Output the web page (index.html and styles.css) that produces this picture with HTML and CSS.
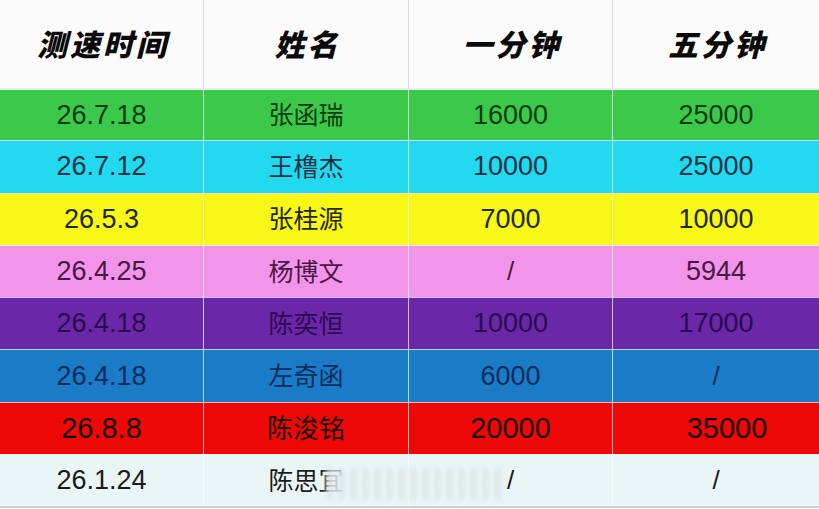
FILE: index.html
```html
<!DOCTYPE html>
<html lang="zh">
<head>
<meta charset="utf-8">
<link rel="stylesheet" href="styles.css">
</head>
<body>
<div class="table">
  <div class="row head">
    <div class="cell">测速时间</div>
    <div class="cell">姓名</div>
    <div class="cell">一分钟</div>
    <div class="cell">五分钟</div>
  </div>
  <div class="row green">
    <div class="cell">26.7.18</div><div class="cell cjk">张函瑞</div><div class="cell">16000</div><div class="cell">25000</div>
  </div>
  <div class="row cyan">
    <div class="cell">26.7.12</div><div class="cell cjk">王橹杰</div><div class="cell">10000</div><div class="cell">25000</div>
  </div>
  <div class="row yellow">
    <div class="cell">26.5.3</div><div class="cell cjk">张桂源</div><div class="cell">7000</div><div class="cell">10000</div>
  </div>
  <div class="row pink">
    <div class="cell">26.4.25</div><div class="cell cjk">杨博文</div><div class="cell slash">/</div><div class="cell">5944</div>
  </div>
  <div class="row purple">
    <div class="cell">26.4.18</div><div class="cell cjk">陈奕恒</div><div class="cell">10000</div><div class="cell">17000</div>
  </div>
  <div class="row blue">
    <div class="cell">26.4.18</div><div class="cell cjk">左奇函</div><div class="cell">6000</div><div class="cell slash">/</div>
  </div>
  <div class="row red">
    <div class="cell">26.8.8</div><div class="cell cjk">陈浚铭</div><div class="cell">20000</div><div class="cell shifted">35000</div>
  </div>
  <div class="row light">
    <div class="cell">26.1.24</div><div class="cell cjk">陈思冝</div><div class="cell slash">/</div><div class="cell slash">/</div>
  </div>
</div>
<div class="watermark"></div>
</body>
</html>
```
FILE: styles.css
```css
html, body {
  margin: 0;
  padding: 0;
  background: #ffffff;
}
body {
  width: 819px;
  height: 509px;
  overflow: hidden;
  position: relative;
  font-family: "Liberation Sans", "Noto Sans CJK SC", sans-serif;
}
.table {
  display: flex;
  flex-direction: column;
  border-bottom: 2px solid #c9d3d3;
}
.row {
  display: grid;
  grid-template-columns: 204px 205px 204px 206px;
  height: 52.3px;
  border-top: 1px solid rgba(255,255,255,0.7);
  box-sizing: border-box;
}
.cell {
  display: flex;
  align-items: center;
  justify-content: center;
  font-size: 27px;
  border-right: 1px solid rgba(255,255,255,0.7);
  box-sizing: border-box;
}
.cell:last-child { border-right: none; }
.cjk {
  font-family: "Noto Sans CJK SC", sans-serif;
  font-size: 25px;
  padding-bottom: 4px;
}
.slash { font-size: 26px; }
.shifted { padding-left: 22px; }

.head {
  height: 88px;
  border-top: none;
  background: #fbfbfb;
}
.head .cell {
  font-family: "Noto Sans CJK SC", sans-serif;
  font-weight: 900;
  font-style: italic;
  font-size: 30px;
  letter-spacing: 3px;
  padding-left: 3px;
  color: #0a0a0a;
  border-right: 1px solid #dcdcdc;
  padding-bottom: 2px;
}
.head .cell:last-child { border-right: none; }

.green { background: #3cc94b; color: #0c3c12; border-top: 2px solid #e6efe6; }
.cyan { background: #22d9ef; color: #163246; }
.yellow { background: #f8f818; color: #262610; }
.pink { background: #f394eb; color: #4a1845; }
.purple { background: #6a27a8; color: #2a0b4e; }
.blue { background: #1a7bc6; color: #0b2c5e; }
.red { background: #ee0808; color: #140404; }
.red .cell { font-size: 29px; }
.red .cjk { font-size: 26px; }
.light { background: #eaf6f6; color: #1a1a1a; }

.watermark {
  position: absolute;
  left: 326px;
  top: 468px;
  width: 176px;
  height: 32px;
  background: repeating-linear-gradient(90deg, rgba(222,229,229,0.9) 0 7px, rgba(236,245,245,0.8) 7px 12px);
  filter: blur(2.5px);
}
```
